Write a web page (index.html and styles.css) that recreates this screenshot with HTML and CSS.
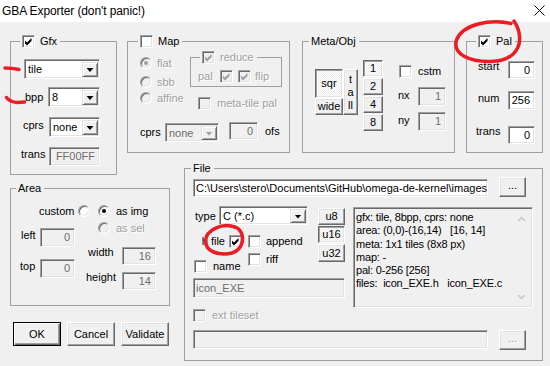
FILE: index.html
```html
<!DOCTYPE html>
<html>
<head>
<meta charset="utf-8">
<link rel="stylesheet" href="styles.css">
</head>
<body>
<div class="window">
  <div class="titlebar">
    <span class="title">GBA Exporter (don't panic!)</span>
    <svg class="close" width="11" height="11" viewBox="0 0 11 11"><path d="M0.5 0.5L10.5 10.5M10.5 0.5L0.5 10.5" stroke="#000" stroke-width="1"/></svg>
  </div>
  <div class="main">
    <fieldset class="grp gfx">
      <legend class="lg-chk"><span class="cb"><svg viewBox="0 0 11 11"><path d="M2 4.5L4 6.5L8.5 2L8.5 5L4 9.5L2 7.5Z"/></svg></span><span>Gfx</span></legend>
      <div class="gfx-body">
        <div class="combo c-tile"><span class="val">tile</span><span class="arrow"></span></div>
        <div class="row r-bpp"><span class="lbl">bpp</span><div class="combo c-bpp"><span class="val">8</span><span class="arrow"></span></div></div>
        <div class="row r-cprs"><span class="lbl">cprs</span><div class="combo c-cprs"><span class="val">none</span><span class="arrow"></span></div></div>
        <div class="row r-trans"><span class="lbl">trans</span><div class="edit dis num e-trans">FF00FF</div></div>
      </div>
    </fieldset>

    <fieldset class="grp map">
      <legend class="lg-chk"><span class="cb"></span><span>Map</span></legend>
      <div class="map-body">
        <div class="map-top">
          <div class="radios">
            <div class="opt dis o-flat"><span class="rd on"></span><span>flat</span></div>
            <div class="opt dis o-sbb"><span class="rd"></span><span>sbb</span></div>
            <div class="opt dis o-affine"><span class="rd"></span><span>affine</span></div>
          </div>
          <div class="map-right">
            <fieldset class="grp reduce">
              <legend class="lg-chk dis"><span class="cb dcb"><svg viewBox="0 0 11 11"><path d="M2 4.5L4 6.5L8.5 2L8.5 5L4 9.5L2 7.5Z"/></svg></span><span>reduce</span></legend>
              <div class="reduce-body dis">
                <span class="lbl l-pal">pal</span>
                <span class="cb dcb"><svg viewBox="0 0 11 11"><path d="M2 4.5L4 6.5L8.5 2L8.5 5L4 9.5L2 7.5Z"/></svg></span>
                <span class="cb dcb cb2"><svg viewBox="0 0 11 11"><path d="M2 4.5L4 6.5L8.5 2L8.5 5L4 9.5L2 7.5Z"/></svg></span>
                <span class="lbl l-flip">flip</span>
              </div>
            </fieldset>
            <div class="opt dis o-mtp"><span class="cb dcb"></span><span>meta-tile pal</span></div>
          </div>
        </div>
        <div class="row map-cprs">
          <span class="lbl l-mcprs">cprs</span>
          <div class="combo dis c-mcprs"><span class="val">none</span><span class="arrow"></span></div>
          <div class="edit dis num e-ofs">0</div>
          <span class="lbl l-ofs">ofs</span>
        </div>
      </div>
    </fieldset>

    <fieldset class="grp meta">
      <legend><span>Meta/Obj</span></legend>
      <div class="meta-body">
        <div class="shape">
          <div class="btn on b-sqr">sqr</div>
          <div class="btn b-tall"><span>t</span><span>a</span><span>ll</span></div>
          <div class="btn b-wide">wide</div>
        </div>
        <div class="nums">
          <div class="btn on">1</div>
          <div class="btn">2</div>
          <div class="btn">4</div>
          <div class="btn">8</div>
        </div>
        <div class="meta-right">
          <div class="opt o-cstm"><span class="cb"></span><span>cstm</span></div>
          <div class="row r-nx"><span class="lbl">nx</span><div class="edit dis num e-n">1</div></div>
          <div class="row r-ny"><span class="lbl">ny</span><div class="edit dis num e-n">1</div></div>
        </div>
      </div>
    </fieldset>

    <fieldset class="grp pal">
      <legend class="lg-chk"><span class="cb"><svg viewBox="0 0 11 11"><path d="M2 4.5L4 6.5L8.5 2L8.5 5L4 9.5L2 7.5Z"/></svg></span><span>Pal</span></legend>
      <div class="pal-body">
        <div class="row r-start"><span class="lbl">start</span><div class="edit num e-pal">0</div></div>
        <div class="row r-num"><span class="lbl">num</span><div class="edit num e-pal e-num">256</div></div>
        <div class="row r-ptrans"><span class="lbl">trans</span><div class="edit num e-pal">0</div></div>
      </div>
    </fieldset>

    <fieldset class="grp area">
      <legend><span>Area</span></legend>
      <div class="area-body">
        <div class="row a-row1">
          <span class="lbl l-custom">custom</span>
          <span class="rd"></span>
          <span class="rd on r-asimg"></span>
          <span class="lbl l-asimg">as img</span>
        </div>
        <div class="a-cols">
          <div class="a-left">
            <div class="row r-left"><span class="lbl">left</span><div class="edit dis num e-area">0</div></div>
            <div class="row r-top"><span class="lbl">top</span><div class="edit dis num e-area">0</div></div>
          </div>
          <div class="a-right">
            <div class="opt dis o-assel"><span class="rd"></span><span>as sel</span></div>
            <div class="row r-width"><span class="lbl">width</span><div class="edit dis num e-area2">16</div></div>
            <div class="row r-height"><span class="lbl">height</span><div class="edit dis num e-area2">14</div></div>
          </div>
        </div>
      </div>
    </fieldset>

    <fieldset class="grp file">
      <legend><span>File</span></legend>
      <div class="file-body">
        <div class="row f-path">
          <div class="edit e-path">C:\Users\stero\Documents\GitHub\omega-de-kernel\images</div>
          <div class="btn b-dots">...</div>
        </div>
        <div class="row f-main">
          <div class="f-left">
            <div class="row f-top">
              <div class="f-opts">
                <div class="row r-type"><span class="lbl">type</span><div class="combo c-type"><span class="val">C (*.c)</span><span class="arrow"></span></div></div>
                <div class="row f-checks">
                  <div class="f-colL">
                    <div class="opt o-hfile"><span>h file</span><span class="cb"><svg viewBox="0 0 11 11"><path d="M2 4.5L4 6.5L8.5 2L8.5 5L4 9.5L2 7.5Z"/></svg></span></div>
                    <div class="opt o-name"><span class="cb"></span><span>name</span></div>
                  </div>
                  <div class="f-colR">
                    <div class="opt o-append"><span class="cb"></span><span>append</span></div>
                    <div class="opt o-riff"><span class="cb"></span><span>riff</span></div>
                  </div>
                </div>
              </div>
              <div class="ucol">
                <div class="btn">u8</div>
                <div class="btn on">u16</div>
                <div class="btn">u32</div>
              </div>
            </div>
            <div class="edit dis e-icon">icon_EXE</div>
          </div>
          <div class="info">
            <div class="info-text">gfx: tile, 8bpp, cprs: none
area: (0,0)-(16,14)   [16, 14]
meta: 1x1 tiles (8x8 px)
map: -
pal: 0-256 [256]
files:  icon_EXE.h   icon_EXE.c</div>
            <div class="sbar">
              <svg width="9" height="6" viewBox="0 0 9 6"><path d="M1 5L4.5 1.5L8 5" fill="none" stroke="#c4c4c4" stroke-width="1.4"/></svg>
              <svg width="9" height="6" viewBox="0 0 9 6"><path d="M1 1L4.5 4.5L8 1" fill="none" stroke="#c4c4c4" stroke-width="1.4"/></svg>
            </div>
          </div>
        </div>
        <div class="opt dis o-ext"><span class="cb dcb"></span><span>ext tileset</span></div>
        <div class="row f-bottom">
          <div class="edit dis e-ext"></div>
          <div class="btn dis b-dots">...</div>
        </div>
      </div>
    </fieldset>

    <div class="buttons">
      <div class="btn b-ok">OK</div>
      <div class="btn b-act">Cancel</div>
      <div class="btn b-act">Validate</div>
    </div>
  </div>

  <svg class="marks" width="550" height="366" viewBox="0 0 550 366">
    <g fill="none" stroke="#ec1c24" stroke-width="3.5" stroke-linecap="round" stroke-linejoin="round">
      <path d="M5 68 Q12 68 19 69.5"/>
      <path d="M6.5 97.5 Q10 102 17 102.5 L24.5 102"/>
      <path d="M511 23.5 C 490 19, 463 24, 456.5 40 C 452 55, 471 62, 491 61.5 C 510 61, 521 51, 519.5 36 C 519 29, 516 24, 514 21"/>
      <path d="M236 227.5 C 222 222, 206 230, 205.5 241 C 205.5 252, 220 256, 232 253 C 243 249.5, 246 236, 238 228.5"/>
    </g>
  </svg>
</div>
</body>
</html>
```
FILE: styles.css
```css
* { box-sizing: border-box; }
html, body { margin: 0; padding: 0; }
body {
  width: 550px; height: 366px; overflow: hidden;
  background: #f0f0f0;
  font-family: "Liberation Sans", Arial, sans-serif;
  font-size: 11px; line-height: 13px; color: #000;
}
.window { position: relative; width: 550px; height: 366px; }

.titlebar {
  height: 22px; background: #fff;
  display: flex; align-items: center; justify-content: space-between;
  padding: 0 5px 1px 2px;
}
.title { font-size: 12px; line-height: 16px; letter-spacing: -0.1px; }
.close { display: block; margin-bottom: 1px; }

.main {
  display: grid;
  grid-template-columns: 107px 10px 43px 14px 106px 12px 153px 11px 77px;
  grid-template-rows: 118px 9px 13px 7px 124px 16px 24px 15px;
  padding: 13px 0 0 10px;
}

/* group boxes */
.grp {
  margin: 0; padding: 0; min-width: 0;
  border: 1px solid #a0a0a0;
}
.grp > legend {
  padding: 0 3px 0 2px; margin-left: 6px;
  height: 13px; line-height: 13px;
  display: flex; align-items: center; gap: 5px;
}
.grp > legend.lg-chk { margin-left: 9px; }
.gfx  { grid-column: 1 / 2; grid-row: 1 / 4; }
.map  { grid-column: 3 / 6; grid-row: 1 / 2; }
.map > legend.lg-chk { margin-left: 10px; }
.meta { grid-column: 7 / 8; grid-row: 1 / 2; }
.pal  { grid-column: 9 / 10; grid-row: 1 / 2; }
.area { grid-column: 1 / 4; grid-row: 5 / 6; }
.area > legend { margin-left: 5px; }
.file { grid-column: 5 / 10; grid-row: 3 / 9; }
.buttons { grid-column: 1 / 4; grid-row: 7 / 8; display: flex; gap: 6px; padding-left: 3px; }

/* generic */
.row { display: flex; align-items: flex-start; }
.lbl { white-space: nowrap; }
.opt { display: flex; align-items: center; gap: 5px; white-space: nowrap; height: 13px; }
.dis, .dis .lbl { color: #a0a0a0; text-shadow: 1px 1px 0 #fff; }

/* sunken edit */
.edit {
  background: #fff;
  border: 1px solid; border-color: #a0a0a0 #fff #fff #a0a0a0;
  box-shadow: inset 1px 1px 0 #696969, inset -1px -1px 0 #e3e3e3;
  display: flex; align-items: center;
  padding: 0 3px 0 3px; white-space: nowrap; overflow: hidden;
  color: #000; text-shadow: none;
}
.edit.num { justify-content: flex-end; padding-right: 4px; }
.edit.dis { background: #f0f0f0; color: #6d6d6d; text-shadow: none; }

/* combo box */
.combo {
  background: #fff;
  border: 1px solid; border-color: #a0a0a0 #fff #fff #a0a0a0;
  box-shadow: inset 1px 1px 0 #696969, inset -1px -1px 0 #e3e3e3;
  display: flex; align-items: stretch;
  padding: 2px 1px 1px 2px; height: 20px;
  text-shadow: none; color: #000;
}
.combo .val { flex: 1; display: flex; align-items: center; padding-left: 1px; white-space: nowrap; overflow: hidden; }
.combo .arrow {
  width: 16px; flex: none;
  background: #f0f0f0;
  border: 1px solid; border-color: #e3e3e3 #696969 #696969 #e3e3e3;
  box-shadow: inset 1px 1px 0 #fff, inset -1px -1px 0 #a0a0a0;
  display: flex; align-items: center; justify-content: center;
}
.combo .arrow::after {
  content: ""; width: 7px; height: 4px; background: #000;
  clip-path: polygon(0 0, 100% 0, 50% 100%);
  margin-top: 1px;
}
.combo.dis { background: #f0f0f0; }
.combo.dis .val { color: #6d6d6d; }
.combo.dis .arrow::after { background: #a0a0a0; }

/* push buttons */
.btn {
  background: #f0f0f0;
  border: 1px solid; border-color: #fff #696969 #696969 #fff;
  box-shadow: inset -1px -1px 0 #a0a0a0, inset 1px 1px 0 #e3e3e3;
  display: flex; align-items: center; justify-content: center;
  white-space: nowrap; color: #000;
}
.btn.on {
  border-color: #696969 #fff #fff #696969;
  box-shadow: inset 1px 1px 0 #a0a0a0, inset -1px -1px 0 #e3e3e3;
  background: repeating-conic-gradient(#fff 0 25%, #ececec 0 50%) 0 0 / 2px 2px;
}
.btn.dis { color: #a0a0a0; text-shadow: 1px 1px 0 #fff; }

/* checkbox */
.cb {
  width: 13px; height: 13px; flex: none;
  background: #fff;
  border: 1px solid; border-color: #a0a0a0 #fff #fff #a0a0a0;
  box-shadow: inset 1px 1px 0 #696969, inset -1px -1px 0 #e3e3e3;
  display: block;
}
.cb svg { display: block; width: 11px; height: 11px; fill: #000; }
.cb.dcb { background: #f0f0f0; }
.cb.dcb svg { fill: #a0a0a0; }

/* radio */
.rd {
  width: 12px; height: 12px; flex: none; border-radius: 50%;
  background: #fff;
  border: 1px solid; border-color: #a0a0a0 #fff #fff #a0a0a0;
  box-shadow: inset 1px 1px 0 #696969, inset -1px -1px 0 #e3e3e3;
  display: flex; align-items: center; justify-content: center;
}
.rd.on::after { content: ""; width: 4px; height: 4px; border-radius: 50%; background: #000; }
.dis .rd { background: #f0f0f0; }
.dis .rd.on::after { background: #a0a0a0; }

/* Gfx */
.gfx-body { padding: 11px 0 0 10px; display: flex; flex-direction: column; }
.c-tile { width: 76px; margin-left: 3px; }
.gfx .row { width: 76px; margin-left: 3px; justify-content: space-between; align-items: center; }
.r-bpp { margin-top: 8px; }
.r-bpp .lbl { margin-left: 1px; }
.c-bpp { width: 52px; }
.r-cprs { margin-top: 10px; }
.r-cprs .lbl { margin-left: -1px; margin-top: -3px; }
.c-cprs { width: 51px; }
.r-trans { margin-top: 10px; }
.r-trans .lbl { margin-left: -3px; margin-top: -4px; }
.e-trans { width: 51px; height: 19px; }

/* Map */
.map-body { padding: 3px 0 0 0; }
.map-top { display: flex; padding-left: 12px; }
.radios { width: 50px; margin-top: 6px; display: flex; flex-direction: column; }
.radios .opt { height: 12px; }
.o-sbb { margin-top: 7px; }
.o-affine { margin-top: 4px; }
.reduce { width: 92px; height: 36px; }
.reduce > legend.lg-chk { margin-left: 9px; }
.reduce-body { display: flex; align-items: center; padding: 6px 0 0 7px; }
.l-pal { width: 22px; }
.cb2 { margin-left: 5px; }
.l-flip { margin-left: 4px; }
.o-mtp { margin: 10px 0 0 8px; gap: 6px; }
.map-cprs { margin: 12px 0 0 12px; }
.l-mcprs { width: 25px; margin-top: 4px; }
.c-mcprs { width: 54px; height: 19px; margin-top: 1px; }
.e-ofs { width: 29px; height: 18px; margin-left: 10px; }
.l-ofs { margin-left: 7px; margin-top: 3px; }

/* Meta/Obj */
.meta-body { display: flex; padding-left: 12px; }
.shape {
  margin-top: 21px;
  display: grid; grid-template-columns: 28px 15px; grid-template-rows: 29px 17px;
}
.b-sqr { grid-column: 1; grid-row: 1; }
.b-wide { grid-column: 1; grid-row: 2; }
.b-tall { grid-column: 2; grid-row: 1 / 3; flex-direction: column; line-height: 13px; }
.nums { margin: 12px 0 0 5px; display: flex; flex-direction: column; gap: 1px; }
.nums .btn { width: 20px; height: 17px; }
.meta-right { margin: 17px 0 0 14px; display: flex; flex-direction: column; }
.o-cstm { margin-left: 2px; gap: 6px; }
.r-nx { margin-top: 9px; }
.r-ny { margin-top: 6px; }
.meta-right .lbl { width: 21px; margin-top: 2px; padding-left: 1px; }
.e-n { width: 28px; height: 19px; }

/* Pal */
.pal-body { padding: 13px 0 0 9px; display: flex; flex-direction: column; }
.pal .lbl { width: 32px; padding-left: 2px; margin-top: -1px; }
.r-ptrans .lbl { padding-left: 0; }
.e-pal { width: 27px; height: 18px; }
.e-num { height: 19px; }
.r-num { margin-top: 12px; }
.r-num .lbl { margin-top: 1px; }
.r-ptrans { margin-top: 16px; }

/* Area */
.area-body { padding-top: 10px; }
.a-row1 { align-items: center; height: 12px; }
.l-custom { width: 39px; margin-left: 28px; }
.r-asimg { margin-left: 8px; }
.l-asimg { margin-left: 6px; }
.a-cols { display: flex; }
.a-left { margin: 11px 0 0 9px; width: 55px; }
.a-left .lbl { width: 20px; padding-left: 1px; margin-top: 1px; }
.r-top { margin-top: 12px; }
.r-top .lbl { padding-left: 0; }
.e-area { width: 35px; height: 19px; }
.a-right { margin: 5px 0 0 11px; }
.o-assel { margin-left: 12px; height: 12px; gap: 6px; }
.r-width { margin-top: 13px; }
.r-height { margin-top: 7px; }
.a-right .lbl { width: 36px; padding-left: 2px; margin-top: -1px; }
.r-height .lbl { padding-left: 0; }
.e-area2 { width: 34px; height: 18px; }

/* buttons */
.buttons .btn { width: 48px; height: 24px; }
.b-ok { border: 1px solid #000; box-shadow: inset 1px 1px 0 #fff, inset -1px -1px 0 #696969, inset -2px -2px 0 #a0a0a0; }

/* File */
.file-body { padding: 2px 0 0 8px; display: flex; flex-direction: column; }
.e-path { width: 295px; height: 18px; margin-top: 2px; padding-left: 2px; }
.b-dots { width: 27px; height: 20px; margin-left: 11px; padding-bottom: 3px; }
.f-main { margin-top: 9px; }
.f-left { width: 152px; display: flex; flex-direction: column; }
.f-opts { width: 115px; }
.r-type .lbl { width: 26px; padding-left: 2px; margin-top: 4px; }
.c-type { width: 89px; height: 19px; }
.f-checks { margin-top: 10px; }
.f-colL { width: 49px; display: flex; flex-direction: column; }
.o-hfile { justify-content: flex-end; gap: 4px; }
.o-name { margin: 12px 0 0 1px; gap: 6px; }
.f-colR { margin-left: 6px; display: flex; flex-direction: column; }
.o-append { gap: 5px; }
.o-riff { margin-top: 5px; }
.ucol { margin: 2px 0 0 10px; display: flex; flex-direction: column; gap: 1px; }
.ucol .btn { width: 27px; height: 17px; }
.ucol .btn:last-child { height: 18px; }
.e-icon { width: 152px; height: 20px; margin-top: 5px; padding-left: 2px; color: #505050; }
.info {
  width: 180px; height: 101px; margin: 1px 0 0 8px;
  border: 1px solid; border-color: #a0a0a0 #fff #fff #a0a0a0;
  box-shadow: inset 1px 1px 0 #696969, inset -1px -1px 0 #e3e3e3;
  display: flex; padding: 2px 2px 2px 2px;
}
.info-text { flex: 1; white-space: pre; line-height: 13.3px; padding-top: 1px; overflow: hidden; letter-spacing: -0.2px; }
.sbar { width: 17px; display: flex; flex-direction: column; justify-content: space-between; align-items: center; padding: 6px 0 5px; }
.sbar svg { display: block; }
.o-ext { margin-top: 1px; gap: 6px; }
.f-bottom { margin-top: 8px; }
.e-ext { width: 295px; height: 19px; }

/* annotation overlay */
.marks { position: absolute; left: 0; top: 0; pointer-events: none; }
```
